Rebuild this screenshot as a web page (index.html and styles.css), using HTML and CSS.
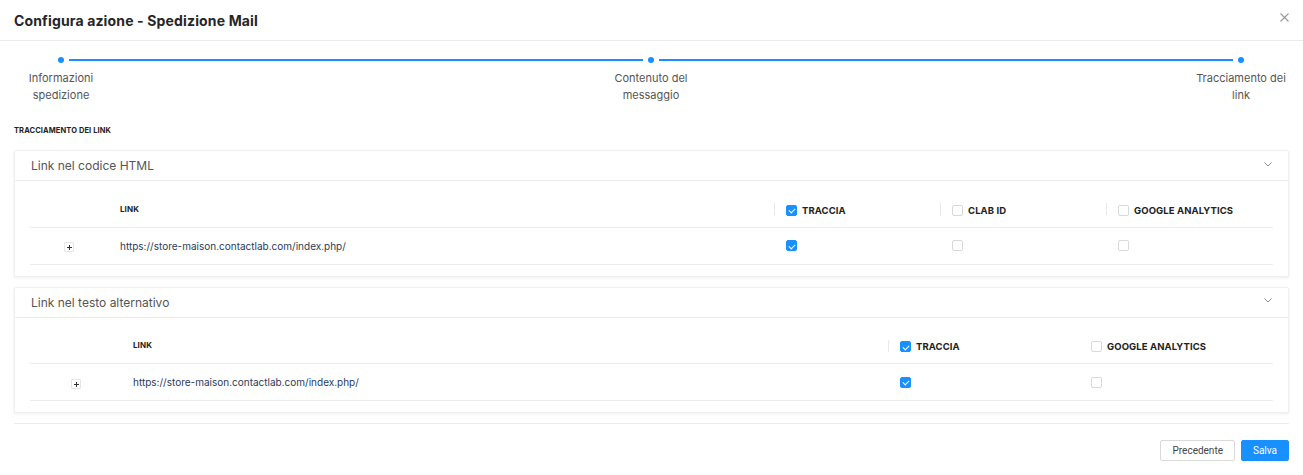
FILE: index.html
```html
<!DOCTYPE html>
<html lang="it">
<head>
<meta charset="utf-8">
<title>Configura azione - Spedizione Mail</title>
<link rel="stylesheet" href="styles.css">
</head>
<body>
<div class="modal">
  <div class="modal-header">
    <h1 class="modal-title">Configura azione - Spedizione Mail</h1>
    <button class="close-btn" aria-label="Chiudi">
      <svg width="9" height="9" viewBox="0 0 9 9"><path d="M0.5 0.5L8.5 8.5M8.5 0.5L0.5 8.5" stroke="#9a9a9a" stroke-width="1.1" fill="none"/></svg>
    </button>
  </div>

  <div class="modal-body">
    <div class="steps">
      <div class="steps-track">
        <span class="step-dot"></span>
        <span class="step-line"></span>
        <span class="step-dot"></span>
        <span class="step-line"></span>
        <span class="step-dot"></span>
      </div>
      <div class="steps-labels">
        <div class="step-label">Informazioni spedizione</div>
        <div class="step-label">Contenuto del messaggio</div>
        <div class="step-label">Tracciamento dei link</div>
      </div>
    </div>

    <div class="section-title">TRACCIAMENTO DEI LINK</div>

    <div class="panel">
      <div class="panel-header">
        <span class="panel-title">Link nel codice HTML</span>
        <svg class="chevron" width="8" height="5" viewBox="0 0 8 5"><path d="M0.5 0.5L4 4L7.5 0.5" stroke="#8c8c8c" stroke-width="1" fill="none"/></svg>
      </div>
      <div class="panel-body">
        <table class="link-table table-html">
          <colgroup>
            <col class="c-exp1"><col><col class="c-166"><col class="c-166"><col class="c-167">
          </colgroup>
          <thead>
            <tr>
              <th></th>
              <th class="th-link">LINK</th>
              <th class="th-check sep"><span class="cb checked"></span><span class="th-label">TRACCIA</span></th>
              <th class="th-check sep"><span class="cb"></span><span class="th-label">CLAB ID</span></th>
              <th class="th-check sep"><span class="cb"></span><span class="th-label">GOOGLE ANALYTICS</span></th>
            </tr>
          </thead>
          <tbody>
            <tr>
              <td class="td-exp"><span class="expand"></span></td>
              <td class="td-link">https://store-maison.contactlab.com/index.php/</td>
              <td class="td-check"><span class="cb checked"></span></td>
              <td class="td-check"><span class="cb"></span></td>
              <td class="td-check"><span class="cb"></span></td>
            </tr>
          </tbody>
        </table>
      </div>
    </div>

    <div class="panel">
      <div class="panel-header">
        <span class="panel-title">Link nel testo alternativo</span>
        <svg class="chevron" width="8" height="5" viewBox="0 0 8 5"><path d="M0.5 0.5L4 4L7.5 0.5" stroke="#8c8c8c" stroke-width="1" fill="none"/></svg>
      </div>
      <div class="panel-body">
        <table class="link-table table-alt">
          <colgroup>
            <col class="c-exp2"><col><col class="c-191"><col class="c-194">
          </colgroup>
          <thead>
            <tr>
              <th></th>
              <th class="th-link">LINK</th>
              <th class="th-check sep"><span class="cb checked"></span><span class="th-label">TRACCIA</span></th>
              <th class="th-check"><span class="cb"></span><span class="th-label">GOOGLE ANALYTICS</span></th>
            </tr>
          </thead>
          <tbody>
            <tr>
              <td class="td-exp"><span class="expand"></span></td>
              <td class="td-link">https://store-maison.contactlab.com/index.php/</td>
              <td class="td-check"><span class="cb checked"></span></td>
              <td class="td-check"><span class="cb"></span></td>
            </tr>
          </tbody>
        </table>
      </div>
    </div>

    <div class="modal-footer">
      <button class="btn">Precedente</button>
      <button class="btn btn-primary">Salva</button>
    </div>
  </div>
</div>
</body>
</html>
```

FILE: styles.css
```css
* { box-sizing: border-box; }

body {
  margin: 0;
  background: #fff;
  font-family: Inter, "Open Sans", sans-serif;
  color: #333;
}

.modal {
  width: 1303px;
  height: 475px;
  background: #fff;
}

.modal-header {
  height: 41px;
  border-bottom: 1px solid #ececec;
  display: flex;
  align-items: center;
  justify-content: space-between;
  padding: 0 14px 0 14px;
}

.modal-title {
  margin: 0;
  font-size: 14px;
  font-weight: 700;
  color: #262626;
  letter-spacing: 0.15px;
}

.close-btn {
  border: 0;
  background: none;
  padding: 0;
  width: 9px;
  height: 9px;
  margin-top: -6px;
  display: flex;
}

.modal-body {
  padding: 0 14px;
}

/* Steps */
.steps {
  padding-top: 16px;
}

.steps-track {
  display: flex;
  align-items: center;
  height: 6px;
  padding-left: 44px;
  padding-right: 45px;
}

.step-dot {
  width: 6px;
  height: 6px;
  border-radius: 50%;
  background: #1890ff;
  flex: none;
}

.step-line {
  flex: 1;
  height: 2px;
  background: #1890ff;
  margin: 0 5px;
}

.steps-labels {
  display: flex;
  justify-content: space-between;
  margin: 7px -2px 0 -3px;
}

.step-label {
  width: 100px;
  text-align: center;
  font-size: 11px;
  line-height: 17px;
  color: #555;
}

.section-title {
  margin-top: 22px;
  font-size: 7.5px;
  font-weight: 700;
  color: #222;
  line-height: 10px;
  letter-spacing: 0.1px;
}

/* Panels */
.panel {
  margin-top: 14px;
  border: 1px solid #f0f0f0;
  border-radius: 2px;
  box-shadow: 0 1px 3px rgba(0, 0, 0, 0.08);
  background: #fff;
}

.panel + .panel {
  margin-top: 10px;
}

.panel-header {
  height: 30px;
  border-bottom: 1px solid #ececec;
  display: flex;
  align-items: center;
  justify-content: space-between;
  padding: 0 16px 0 16px;
}

.panel-title {
  font-size: 12px;
  color: #555;
}

.chevron {
  margin-top: -3px;
}

.panel-body {
  padding: 10px 15px 11px 15px;
}

/* Tables */
.link-table {
  width: 100%;
  border-collapse: collapse;
  table-layout: fixed;
}

.c-exp1 { width: 78px; }
.c-exp2 { width: 91px; }
.c-166 { width: 166px; }
.c-167 { width: 167px; }
.c-191 { width: 191px; }
.c-194 { width: 194px; }

.link-table th {
  height: 36px;
  text-align: left;
  vertical-align: middle;
  border-bottom: 1px solid #ececec;
  font-weight: 700;
  padding: 0;
}

.th-link {
  font-size: 8px;
  color: #222;
  padding-left: 12px !important;
  letter-spacing: 0.1px;
}

.th-check {
  position: relative;
  padding-left: 12px !important;
  white-space: nowrap;
}

.th-check.sep::before {
  content: "";
  position: absolute;
  left: 0;
  top: 12px;
  width: 1px;
  height: 12px;
  background: #e8e8e8;
}

.th-check .cb {
  vertical-align: middle;
}

.th-label {
  display: inline-block;
  vertical-align: middle;
  margin-left: 5px;
  font-size: 9.5px;
  font-weight: 700;
  color: #222;
  letter-spacing: 0.1px;
}

.link-table td {
  height: 37px;
  border-bottom: 1px solid #ececec;
  vertical-align: middle;
  padding: 0;
}

.td-exp {
  text-align: center;
}

.td-link {
  padding-left: 12px !important;
  font-size: 10px;
  color: #2a3b5c;
}

.td-check {
  padding-left: 12px !important;
}

.td-check .cb {
  display: block;
}

/* Checkbox */
.cb {
  display: inline-block;
  width: 11px;
  height: 11px;
  border: 1px solid #d9d9d9;
  border-radius: 2px;
  background: #fff;
  position: relative;
}

.cb.checked {
  background: #1890ff;
  border-color: #1890ff;
}

.cb.checked::after {
  content: "";
  position: absolute;
  left: 3px;
  top: 1.5px;
  width: 3px;
  height: 5px;
  border: solid #fff;
  border-width: 0 1.3px 1.3px 0;
  transform: rotate(45deg);
}

/* Expand icon */
.expand {
  display: inline-block;
  width: 10px;
  height: 10px;
  border: 1px solid #e6e6e6;
  border-radius: 1px;
  position: relative;
  vertical-align: middle;
  background: #fff;
}

.expand::before {
  content: "";
  position: absolute;
  left: 2px;
  top: 4px;
  width: 5px;
  height: 1px;
  background: #333;
}

.expand::after {
  content: "";
  position: absolute;
  left: 4px;
  top: 2px;
  width: 1px;
  height: 5px;
  background: #333;
}

/* Footer */
.modal-footer {
  margin-top: 10px;
  border-top: 1px solid #ececec;
  display: flex;
  justify-content: flex-end;
  gap: 6px;
  padding-top: 16px;
}

.btn {
  height: 21px;
  padding: 0 11px;
  border: 1px solid #d9d9d9;
  border-radius: 2px;
  background: #fff;
  font-family: Roboto, "Liberation Sans", sans-serif;
  font-size: 10px;
  color: #444;
}

.btn-primary {
  background: #1890ff;
  border-color: #1890ff;
  color: #fff;
}
```
